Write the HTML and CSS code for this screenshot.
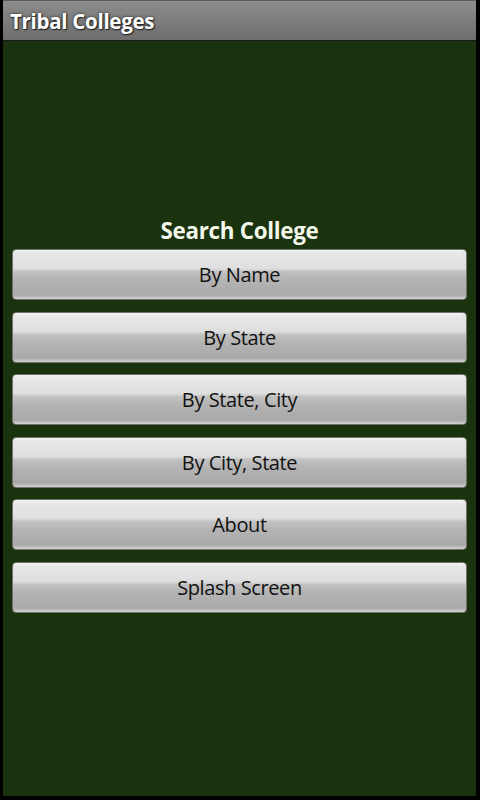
FILE: index.html
```html
<!DOCTYPE html>
<html lang="en">
<head>
    <meta charset="UTF-8">
    <meta name="viewport" content="width=device-width, initial-scale=1.0">
    <title>Tribal Colleges</title>
    <link rel="stylesheet" href="styles.css">
</head>
<body>
    <div class="screen">
        <div class="title-bar">Tribal Colleges</div>

        <div class="content">
            <h2>Search College</h2>
            <div class="menu">
                <button>By Name</button>
                <button>By State</button>
                <button>By State, City</button>
                <button>By City, State</button>
                <button>About</button>
                <button>Splash Screen</button>
            </div>
        </div>
    </div>
</body>
</html>
```

FILE: styles.css
```css
html, body {
    margin: 0;
    padding: 0;
    height: 100%;
}

body {
    background-color: #000;
    font-family: 'Open Sans', 'DejaVu Sans', sans-serif;
}

.screen {
    display: flex;
    flex-direction: column;
    height: 796px;
    margin: 0 4px 0 3px;
    background-color: #1b320e;
}

.title-bar {
    height: 39px;
    padding-left: 7px;
    display: flex;
    align-items: center;
    background: linear-gradient(#8c8c8c, #6e6e6e);
    border-top: 1px solid #5a5a5a;
    border-bottom: 1px solid #1a1a1a;
    color: #fff;
    font-size: 20.5px;
    font-weight: bold;
    letter-spacing: -0.3px;
    text-shadow: 0 0 3px #222, 1px 1px 1px #222;
}

.content {
    padding: 176px 9px 0;
}

h2 {
    margin: 0 0 4px;
    height: 28px;
    line-height: 28px;
    text-align: center;
    color: #f2f7ea;
    font-size: 22.4px;
    font-weight: bold;
    letter-spacing: -0.3px;
}

.menu {
    display: flex;
    flex-direction: column;
    gap: 11.5px;
}

button {
    height: 51px;
    padding: 0;
    border: 1px solid #6f7268;
    border-radius: 4px;
    background: linear-gradient(
        #f4f4f4 0%,
        #e8e8e8 6%,
        #dedede 38%,
        #c2c2c2 44%,
        #b4b4b4 60%,
        #a9a9a9 92%,
        #d4d4d4 100%
    );
    color: #111;
    font-family: 'Open Sans', 'DejaVu Sans', sans-serif;
    font-size: 20px;
    letter-spacing: -0.4px;
}
```
